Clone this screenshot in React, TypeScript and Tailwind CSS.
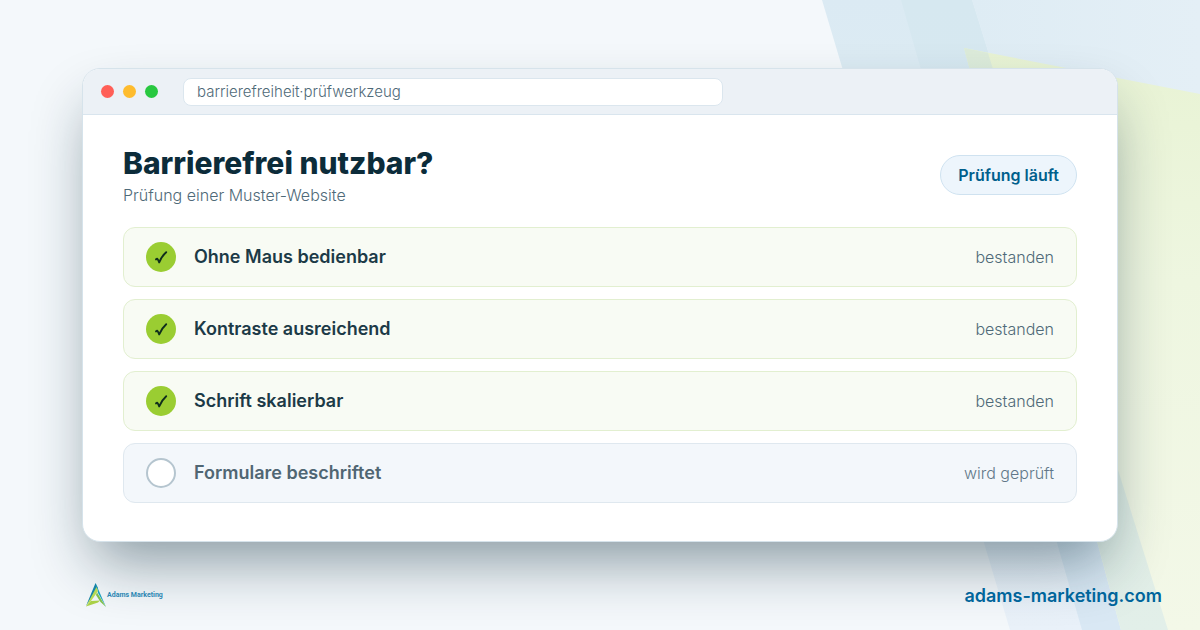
type Check = {
  label: string
  status: string
  done: boolean
}

const checks: Check[] = [
  { label: 'Ohne Maus bedienbar', status: 'bestanden', done: true },
  { label: 'Kontraste ausreichend', status: 'bestanden', done: true },
  { label: 'Schrift skalierbar', status: 'bestanden', done: true },
  { label: 'Formulare beschriftet', status: 'wird geprüft', done: false },
]

function Backdrop() {
  return (
    <svg
      className="absolute inset-0 h-full w-full"
      viewBox="0 0 1200 630"
      preserveAspectRatio="xMaxYMin slice"
      aria-hidden="true"
    >
      <defs>
        <linearGradient id="sky" x1="0" y1="0" x2="0" y2="1">
          <stop offset="0" stopColor="#dbeaf3" />
          <stop offset="0.1" stopColor="#dcebf3" />
          <stop offset="1" stopColor="#e9f1f9" />
        </linearGradient>
        <linearGradient id="skyRight" x1="0" y1="0" x2="1" y2="0">
          <stop offset="0" stopColor="#deecf4" />
          <stop offset="1" stopColor="#e4eff6" />
        </linearGradient>
        <linearGradient id="band" x1="0" y1="0" x2="0" y2="1">
          <stop offset="0" stopColor="#d6e8f0" />
          <stop offset="1" stopColor="#d9e8f4" />
        </linearGradient>
        <linearGradient id="lime" x1="0" y1="0" x2="0" y2="1">
          <stop offset="0" stopColor="#e8f3d4" />
          <stop offset="0.4" stopColor="#eef6e0" />
          <stop offset="1" stopColor="#f3f8e8" />
        </linearGradient>
        <linearGradient id="overlap" x1="0" y1="0" x2="0" y2="1">
          <stop offset="0" stopColor="#dcebda" />
          <stop offset="1" stopColor="#e2efe9" />
        </linearGradient>
      </defs>
      <path d="M822 0H972L1168 630H1010Z" fill="url(#sky)" />
      <path d="M972 0H1200V630H1168Z" fill="url(#skyRight)" />
      <path d="M901 0H972L1168 630H1082Z" fill="url(#band)" />
      <path d="M964 48L1200 94V630H1121Z" fill="url(#lime)" />
      <path d="M964 48L988 53L1168 630H1121Z" fill="url(#overlap)" />
    </svg>
  )
}

function Logo() {
  return (
    <a href="/" className="flex items-center" aria-label="Adams Marketing">
      <svg className="h-[26px] w-[22px]" viewBox="0 0 22 26" aria-hidden="true">
        <path d="M10.5 1L1 24L8 13L13 6Z" fill="#1583a8" />
        <path d="M10.5 1L21 25L13 11L12 6Z" fill="#1ba0bd" />
        <path d="M11.5 5L1 24.5L6 19L13 9Z" fill="#b9da55" />
        <path d="M1 24.5L6 19L15 18.5L13 20.5Z" fill="#a9d046" />
        <path d="M12 10.5L21 25L15.5 20L11 13Z" fill="#7fbf4a" />
      </svg>
      <span className="font-['Roboto',sans-serif] text-[7px] leading-2 font-bold text-[#2b86b3]">
        Adams Marketing
      </span>
    </a>
  )
}

function CheckRow({ label, status, done }: Check) {
  return (
    <li
      className={
        done
          ? 'flex h-15 items-center rounded-xl border border-[#e2efd0] bg-[#f8fbf4] px-[22px]'
          : 'flex h-15 items-center rounded-xl border border-[#dfe8ef] bg-[#f3f7fb] px-[22px]'
      }
    >
      {done ? (
        <span className="flex size-[30px] items-center justify-center rounded-full bg-[#9acd32]">
          <svg className="size-[18px]" viewBox="0 0 18 18" aria-hidden="true">
            <path
              d="M4 11.4L5.3 10.7C6.1 11.8 6.7 13 7.2 14.4C8.8 10.4 11 7 14.2 4.2"
              fill="none"
              stroke="#0f2e1c"
              strokeWidth="1.9"
              strokeLinecap="round"
              strokeLinejoin="round"
            />
          </svg>
        </span>
      ) : (
        <span className="size-[30px] rounded-full border-2 border-[#b5c5cf] bg-white" />
      )}
      <span
        className={
          done
            ? 'ml-[18px] text-lg leading-6 font-semibold text-[#1c3a47]'
            : 'ml-[18px] text-lg leading-6 font-semibold text-[#506673]'
        }
      >
        {label}
      </span>
      <span className={done ? 'ml-auto text-base font-light text-[#4f6a78]' : 'ml-auto text-base font-light text-[#617789]'}>
        {status}
      </span>
    </li>
  )
}

export default function App() {
  return (
    <div className="relative min-h-screen overflow-hidden bg-[#f4f8fb] font-['Inter',sans-serif]">
      <Backdrop />
      <div className="relative flex min-h-screen flex-col pt-[68px]">
        <main className="mx-[82px] overflow-hidden rounded-[18px] border border-[#d6e3eb] bg-white shadow-[0_30px_60px_-12px_rgba(12,44,58,0.48)]">
          <div className="flex h-[46px] items-center border-b border-[#d9e5ee] bg-[#ecf1f6] px-[18px]">
            <div className="flex gap-[9px]">
              <span className="size-[13px] rounded-full bg-[#ff5f57]" />
              <span className="size-[13px] rounded-full bg-[#febc2e]" />
              <span className="size-[13px] rounded-full bg-[#28c840]" />
            </div>
            <input
              type="text"
              readOnly
              aria-label="Adresse"
              defaultValue="barrierefreiheit·prüfwerkzeug"
              className="ml-[25px] h-7 w-[55%] max-w-[540px] rounded-lg border border-[#dbe6ee] bg-white px-[13px] text-[15px] font-light text-[#4f6a78]"
            />
          </div>
          <div className="px-10 pt-[30px] pb-[38px]">
            <header className="flex items-center justify-between">
              <div>
                <h1 className="text-3xl leading-9 font-extrabold text-[#0c2c3a]">Barrierefrei nutzbar?</h1>
                <p className="mt-1 text-base leading-5 font-light text-[#4f6a78]">Prüfung einer Muster-Website</p>
              </div>
              <span className="flex h-10 items-center rounded-full border border-[#cfe2f0] bg-[#edf5fc] px-[17px] text-base font-semibold text-[#005f8c]">
                Prüfung läuft
              </span>
            </header>
            <ul className="mt-[22px] flex flex-col gap-3">
              {checks.map((check) => (
                <CheckRow key={check.label} {...check} />
              ))}
            </ul>
          </div>
        </main>
        <footer className="mt-auto flex items-start justify-between pr-[38px] pb-5 pl-[85px]">
          <Logo />
          <a href="https://adams-marketing.com" className="text-lg font-semibold text-[#00659b]">
            adams-marketing.com
          </a>
        </footer>
      </div>
    </div>
  )
}
